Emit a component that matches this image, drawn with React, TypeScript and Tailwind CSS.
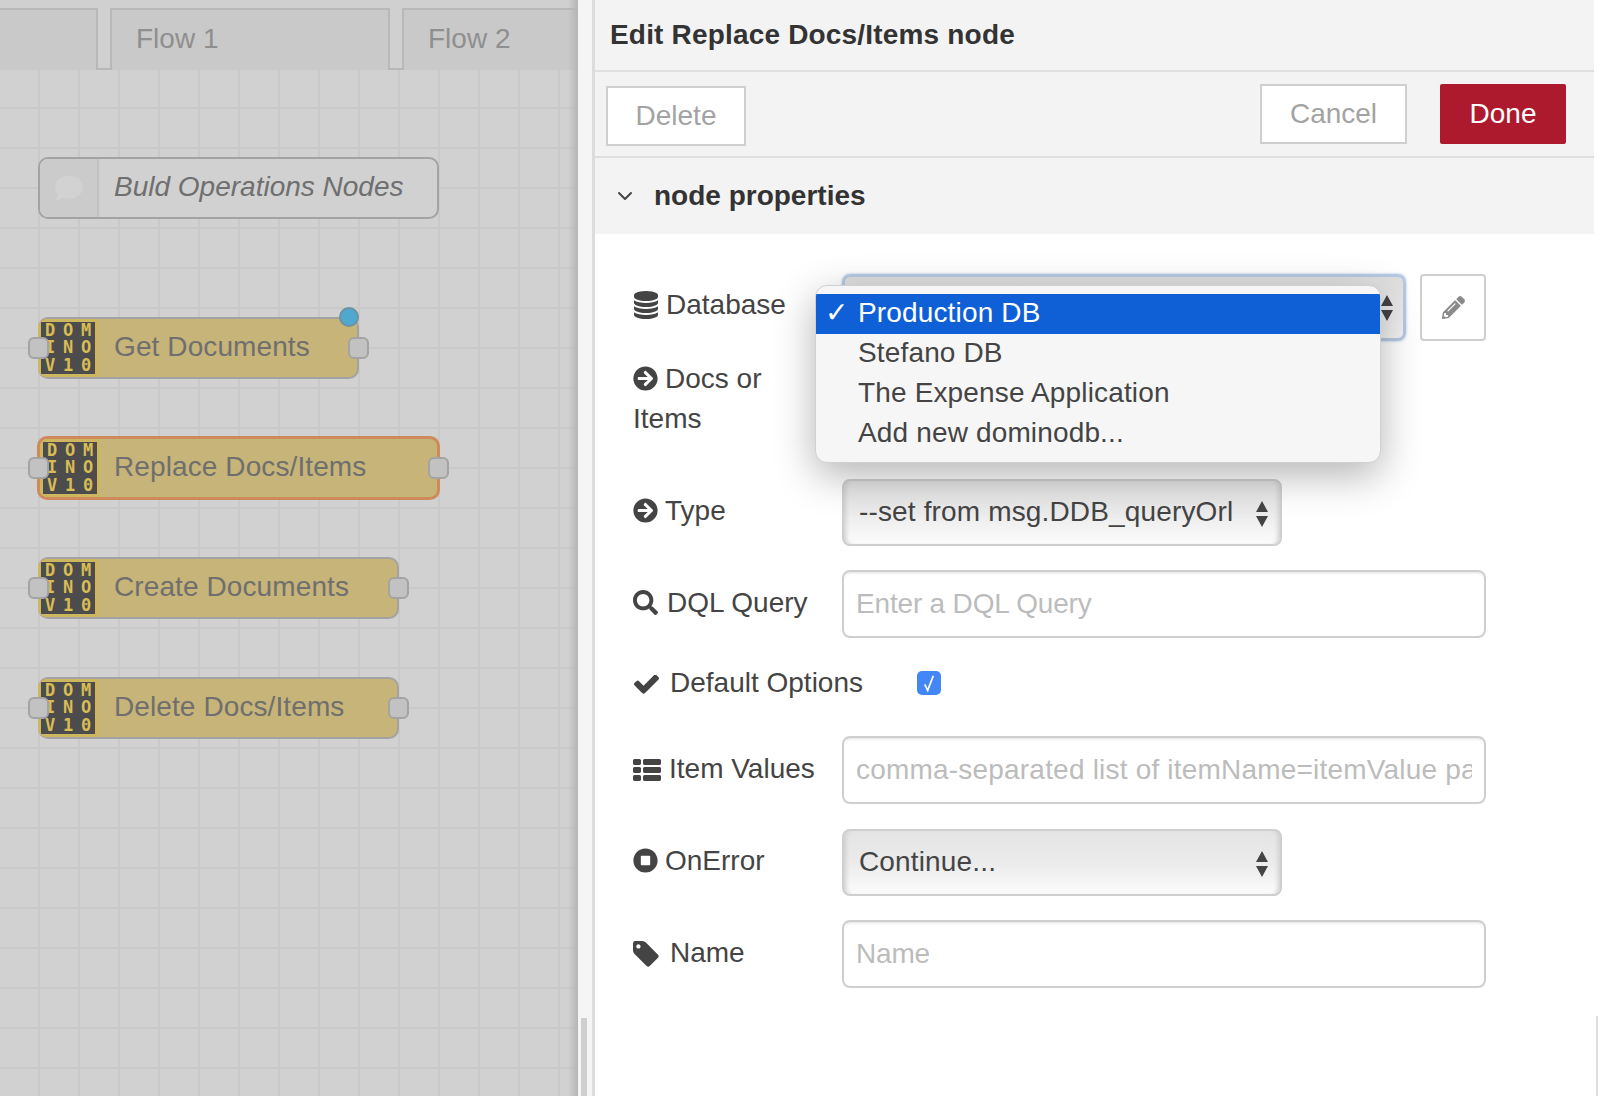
import type { ReactNode } from "react";
import {
  FaArrowCircleRight,
  FaComment,
  FaPencilAlt,
  FaSearch,
  FaStopCircle,
} from "react-icons/fa";
import { ChevronDown } from "lucide-react";

const nodes = [
  { label: "Get Documents", top: "top-[317px]", width: "w-[321px]", dot: true },
  { label: "Replace Docs/Items", top: "top-[437px]", width: "w-[401px]", selected: true },
  { label: "Create Documents", top: "top-[557px]", width: "w-[361px]" },
  { label: "Delete Docs/Items", top: "top-[677px]", width: "w-[361px]" },
];

function Port({ className }: { className: string }) {
  return (
    <div
      className={`absolute top-[20px] w-[21px] h-[22px] rounded-[6px] border-2 border-[#a3a3a3] bg-[#c2c2c2] ${className}`}
    />
  );
}

function DominoIcon() {
  return (
    <div className="w-[60px] h-full shrink-0 bg-[#cdb65e] p-[3px]">
      <div className="w-full h-full bg-[#4c4c4c] grid grid-cols-3 grid-rows-3 place-items-center font-['DejaVu_Sans_Mono',monospace] font-bold text-[17px] leading-none text-[#d8bc55]">
        {["D", "O", "M", "I", "N", "O", "V", "1", "0"].map((c, i) => (
          <span key={i}>{c}</span>
        ))}
      </div>
    </div>
  );
}

function FlowNode({ node }: { node: (typeof nodes)[number] }) {
  return (
    <div className={`absolute left-[38px] h-[62px] ${node.top} ${node.width}`}>
      <div
        className={`flex overflow-hidden rounded-[10px] bg-[#c7b478] ${
          node.selected
            ? "-m-[1px] h-[64px] border-[3px] border-[#cf8a5c]"
            : "h-full border-2 border-l-0 border-[#a3a3a3]"
        }`}
      >
        <DominoIcon />
        <span
          className={`leading-[56px] tracking-[0.1px] text-[#6f6f6f] ${
            node.selected ? "pl-[14px]" : "pl-[16px]"
          }`}
        >
          {node.label}
        </span>
      </div>
      <Port className="-left-[10px]" />
      <Port className="-right-[10px]" />
      {node.dot && (
        <div className="absolute -top-[10px] right-[0px] w-[20px] h-[20px] rounded-full bg-[#4fa8d0] border-2 border-[#6c929f]" />
      )}
    </div>
  );
}

function Tab({ label, width }: { label: string; width: string }) {
  return (
    <div
      className={`h-[62px] -mb-[2px] shrink-0 bg-[#c9c9c9] border-x-2 border-t-2 border-[#b8b8b8] pl-[24px] leading-[58px] text-[#8f8f8f] ${width}`}
    >
      {label}
    </div>
  );
}

function Workspace() {
  return (
    <div className="relative w-[578px] h-full shrink-0 overflow-hidden bg-[#d1d1d1]">
      <div className="h-[70px] flex items-end gap-[12px] border-b-2 border-[#b8b8b8] bg-[#d0d0d0]">
        <div className="w-[98px] h-[62px] -mb-[2px] shrink-0 bg-[#c9c9c9] border-t-2 border-r-2 border-[#b8b8b8]" />
        <Tab label="Flow 1" width="w-[280px]" />
        <Tab label="Flow 2" width="w-[200px]" />
      </div>
      <div className="absolute inset-x-0 top-[70px] bottom-0 bg-[linear-gradient(#c9c9c9_2px,transparent_2px),linear-gradient(90deg,#c9c9c9_2px,transparent_2px)] bg-[size:40px_40px] bg-[position:-2px_-3px]" />
      <div className="absolute left-[38px] top-[157px] w-[401px] h-[62px] flex rounded-[10px] border-2 border-[#a3a3a3] bg-[#d1d1d1]">
        <div className="w-[59px] shrink-0 rounded-l-[8px] bg-[#cbcbcb] border-r-2 border-[#c2c2c2] flex items-center justify-center">
          <FaComment className="w-[28px] h-[28px] text-[#d2d2d2]" />
        </div>
        <span className="pl-[15px] leading-[56px] italic text-[#6f6f6f]">Buld Operations Nodes</span>
      </div>
      {nodes.map((n) => (
        <FlowNode key={n.label} node={n} />
      ))}
      <div className="absolute right-0 top-0 bottom-0 w-[10px] bg-gradient-to-r from-transparent to-[#b5b5b5]" />
    </div>
  );
}

function Row({
  icon,
  label,
  className,
  labelClass = "pb-[4px]",
  children,
}: {
  icon?: ReactNode;
  label: ReactNode;
  className: string;
  labelClass?: string;
  children?: ReactNode;
}) {
  return (
    <div className={`flex items-center ${className}`}>
      <div className={`w-[209px] shrink-0 whitespace-nowrap leading-[40px] text-[#444] ${labelClass}`}>
        {icon}
        {label}
      </div>
      {children}
    </div>
  );
}

function Arrows({ className = "" }: { className?: string }) {
  return (
    <svg viewBox="0 0 14 26" className={`w-[14px] h-[26px] fill-[#444] ${className}`}>
      <path d="M7 0l6 11H1zM7 26l-6-11h12z" />
    </svg>
  );
}

function Select({ text }: { text: string }) {
  return (
    <div className="relative h-[67px] w-[440px] rounded-[8px] border-2 border-[#cfcfcf] bg-gradient-to-b from-[#e4e4e4] via-[#ebebeb] to-[#fbfbfb] shadow-[inset_5px_0_4px_-3px_#cfcfcf,inset_-5px_0_4px_-3px_#cfcfcf] pl-[15px] leading-[62px] tracking-[0.15px] text-[#444]">
      {text}
      <Arrows className="absolute right-[11px] top-[20px]" />
    </div>
  );
}

function TextInput({ placeholder, tracking = "tracking-[-0.18px]" }: { placeholder: string; tracking?: string }) {
  return (
    <input
      placeholder={placeholder}
      className={`w-[644px] h-[68px] rounded-[8px] border-2 border-[#cfcfcf] bg-white px-[12px] text-[28px] outline-none shadow-[inset_0_3px_3px_-2px_#e0e0e0] placeholder:text-[#bcbcbc] ${tracking}`}
    />
  );
}

const iconClass = "inline-block align-[-3px] text-[#444]";

// font awesome 4 shapes, the v5 ones in react-icons look different
function DatabaseIcon() {
  return (
    <svg viewBox="128 0 1536 1792" fill="currentColor" className={`${iconClass} mr-[8px] ml-[1px] w-[24px] h-[28px] align-[-5px]`}>
      <path d="M896 768q237 0 443-43t325-127v170q0 69-103 128t-280 93.5-385 34.5-385-34.5-280-93.5-103-128v-170q119 84 325 127t443 43zm0 768q237 0 443-43t325-127v170q0 69-103 128t-280 93.5-385 34.5-385-34.5-280-93.5-103-128v-170q119 84 325 127t443 43zm0-384q237 0 443-43t325-127v170q0 69-103 128t-280 93.5-385 34.5-385-34.5-280-93.5-103-128v-170q119 84 325 127t443 43zm0-1152q208 0 385 34.5t280 93.5 103 128v128q0 69-103 128t-280 93.5-385 34.5-385-34.5-280-93.5-103-128v-128q0-69 103-128t280-93.5 385-34.5z" />
    </svg>
  );
}

function CheckIcon() {
  return (
    <svg viewBox="121 362 1550 1232" fill="currentColor" className={`${iconClass} mr-[11px] w-[25px] h-[20px] ml-[1px]`}>
      <path d="M1671 566q0 40-28 68l-724 724-136 136q-28 28-68 28t-68-28l-136-136-362-362q-28-28-28-68t28-68l136-136q28-28 68-28t68 28l294 295 656-657q28-28 68-28t68 28l136 136q28 28 28 68z" />
    </svg>
  );
}

function ListIcon() {
  return (
    <svg viewBox="0 128 1792 1408" fill="currentColor" className={`${iconClass} mr-[8px] w-[28px] h-[22px]`}>
      <path d="M512 1248v192q0 40-28 68t-68 28h-320q-40 0-68-28t-28-68v-192q0-40 28-68t68-28h320q40 0 68 28t28 68zm0-512v192q0 40-28 68t-68 28h-320q-40 0-68-28t-28-68v-192q0-40 28-68t68-28h320q40 0 68 28t28 68zm1280 512v192q0 40-28 68t-68 28h-960q-40 0-68-28t-28-68v-192q0-40 28-68t68-28h960q40 0 68 28t28 68zm-1280-1024v192q0 40-28 68t-68 28h-320q-40 0-68-28t-28-68v-192q0-40 28-68t68-28h320q40 0 68 28t28 68zm1280 512v192q0 40-28 68t-68 28h-960q-40 0-68-28t-28-68v-192q0-40 28-68t68-28h960q40 0 68 28t28 68zm0-512v192q0 40-28 68t-68 28h-960q-40 0-68-28t-28-68v-192q0-40 28-68t68-28h960q40 0 68 28t28 68z" />
    </svg>
  );
}

function TagIcon() {
  return (
    <svg viewBox="128 128 1536 1536" fill="currentColor" className={`${iconClass} mr-[11px] w-[26px] h-[26px] align-[-5px]`}>
      <path d="M576 448q0-53-37.5-90.5t-90.5-37.5-90.5 37.5-37.5 90.5 37.5 90.5 90.5 37.5 90.5-37.5 37.5-90.5zm1067 576q0 53-37 90l-491 492q-39 37-91 37-53 0-90-37l-715-716q-38-37-64.5-101t-26.5-117v-416q0-52 38-90t90-38h416q53 0 117 26.5t102 64.5l715 714q37 39 37 91z" />
    </svg>
  );
}

function EditPanel() {
  return (
    <div className="relative flex-1 h-full min-w-0 flex flex-col border-l-[3px] border-[#dcdcdc] bg-white">
      <div className="h-[72px] bg-[#f3f3f3] border-b-2 border-[#dfdfdf] pl-[15px] mr-[8px] leading-[69px] tracking-[0.18px] font-bold text-[#333]">
        Edit Replace Docs/Items node
      </div>
      <div className="h-[86px] bg-[#f3f3f3] border-b-2 border-[#dfdfdf] pl-[11px] pr-[28px] mr-[8px] flex">
        <button className="mt-[14px] w-[140px] h-[60px] border-2 border-[#cfcfcf] bg-white text-[#a3a3a3]">Delete</button>
        <button className="ml-auto mt-[12px] w-[147px] h-[60px] border-2 border-[#cfcfcf] bg-white text-[#a3a3a3]">Cancel</button>
        <button className="ml-[33px] mt-[12px] w-[126px] h-[60px] rounded-[2px] bg-[#ad1a2d] text-white">Done</button>
      </div>
      <div className="h-[76px] bg-[#f3f3f3] mr-[8px] flex items-center pl-[18px] font-bold text-[#333]">
        <ChevronDown className="w-[24px] h-[24px] text-[#444] mr-[17px]" strokeWidth={2} />
        node properties
      </div>

      <div className="relative pl-[38px] pt-[40px]">
        <Row icon={<DatabaseIcon />} label="Database" labelClass="pb-[6px]" className="">
          <div className="w-[564px] h-[67px] rounded-[8px] border-[3px] border-[#b6c9e2] bg-gradient-to-b from-[#dedede] to-[#f4f4f4] shadow-[0_0_3px_#a9c4e6] flex items-center justify-end pr-[9px]">
            <Arrows />
          </div>
          <button className="ml-[14px] w-[66px] h-[67px] rounded-[4px] border-2 border-[#cfcfcf] bg-white flex items-center justify-center">
            <FaPencilAlt className="w-[23px] h-[23px] text-[#8a8a8a]" />
          </button>
        </Row>
        <Row
          icon={<FaArrowCircleRight className={`${iconClass} mr-[7px] w-[25px] h-[25px]`} />}
          label={
            <>
              Docs or
              <br />
              Items
            </>
          }
          labelClass=""
          className="mt-[18px] h-[80px]"
        />
        <Row
          icon={<FaArrowCircleRight className={`${iconClass} mr-[7px] w-[25px] h-[25px]`} />}
          label="Type"
          className="mt-[40px]"
        >
          <Select text="--set from msg.DDB_queryOrl" />
        </Row>
        <Row
          icon={<FaSearch className={`${iconClass} mr-[9px] w-[25px] h-[25px]`} />}
          label="DQL Query"
          labelClass="pb-[2px]"
          className="mt-[24px]"
        >
          <TextInput placeholder="Enter a DQL Query" />
        </Row>
        <Row icon={<CheckIcon />} label="Default Options" labelClass="" className="mt-[33px] h-[24px]">
          <div className="ml-[75px] w-[24px] h-[24px] rounded-[5px] bg-[#4287f5] flex items-center justify-center">
            <svg viewBox="0 0 16 22" className="w-[14px] h-[19px] fill-none stroke-white stroke-2">
              <path d="M3 12l3.5 7L13 2" />
            </svg>
          </div>
        </Row>
        <Row icon={<ListIcon />} label="Item Values" labelClass="pb-[2px]" className="mt-[41px]">
          <TextInput placeholder="comma-separated list of itemName=itemValue pairs" tracking="tracking-[0.2px]" />
        </Row>
        <Row
          icon={<FaStopCircle className={`${iconClass} mr-[7px] w-[25px] h-[25px]`} />}
          label="OnError"
          className="mt-[25px]"
        >
          <Select text="Continue..." />
        </Row>
        <Row icon={<TagIcon />} label="Name" labelClass="pb-[2px]" className="mt-[24px]">
          <TextInput placeholder="Name" />
        </Row>

        <div className="absolute left-[220px] top-[51px] w-[566px] h-[178px] rounded-[12px] border border-[#d0d0d0] bg-[#f6f6f6] py-[8px] shadow-[0_12px_40px_rgba(0,0,0,0.3)] overflow-hidden tracking-[0.15px] text-[#444]">
          <div className="relative h-[40px] bg-[#0f5fd7] pl-[42px] leading-[38px] text-white">
            <span className="absolute left-[9px] italic font-['DejaVu_Sans',sans-serif] font-bold">✓</span>
            Production DB
          </div>
          <div className="h-[40px] pl-[42px] leading-[38px]">Stefano DB</div>
          <div className="h-[40px] pl-[42px] leading-[38px]">The Expense Application</div>
          <div className="h-[40px] pl-[42px] leading-[38px]">Add new dominodb...</div>
        </div>
      </div>
      <div className="absolute right-[4px] top-[1016px] bottom-0 w-[2px] bg-[#dedede]" />
    </div>
  );
}

export default function App() {
  return (
    <div className="flex w-[1602px] h-[1096px] overflow-hidden bg-white font-['Liberation_Sans',Arial,sans-serif] text-[28px]">
      <Workspace />
      <div className="relative w-[14px] h-full shrink-0 bg-[#f5f5f5]">
        <div className="absolute left-[3px] top-[1018px] bottom-0 w-[6px] bg-[#cfcfcf]" />
      </div>
      <EditPanel />
    </div>
  );
}
